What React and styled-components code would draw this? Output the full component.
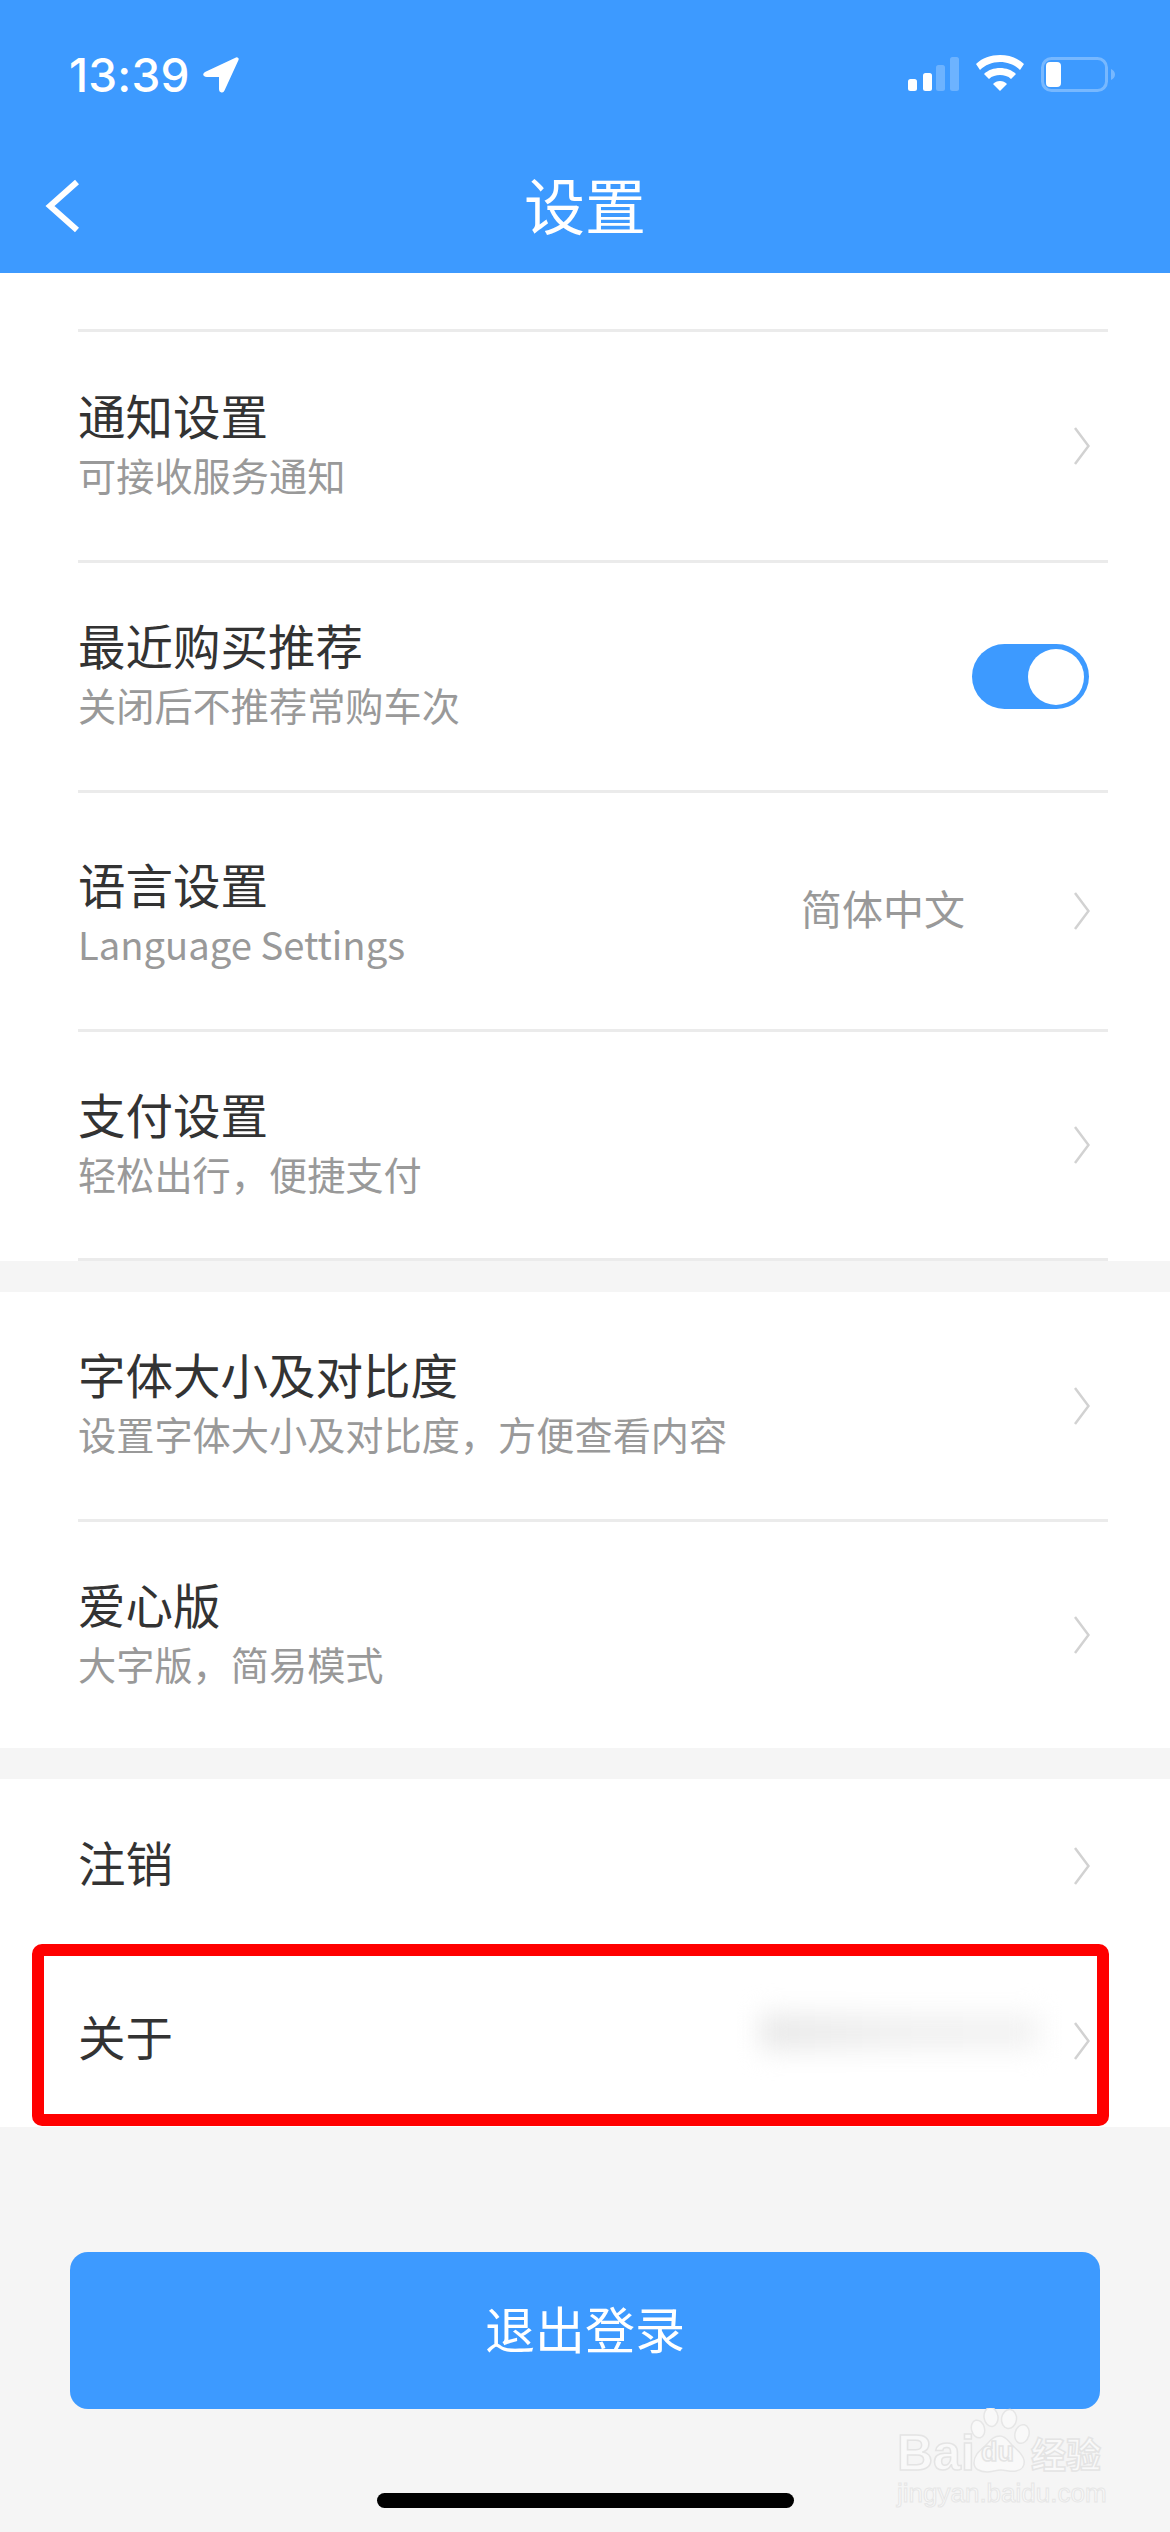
import styled, { createGlobalStyle } from "styled-components";

const GlobalStyle = createGlobalStyle`
  html, body {
    margin: 0;
    padding: 0;
    background: #f5f5f5;
  }
  * {
    box-sizing: border-box;
  }
`;

const cn = `"Noto Sans CJK SC", "Noto Sans", sans-serif`;

export default function App() {
  return (
    <Page>
      <GlobalStyle />
      <Header>
        <StatusBar>
          <Time>
            13:39
            <svg width="36" height="36" viewBox="0 0 36 36">
              <path d="M33 0.500 L2 15 Q-1 17 1 19 Q2 20 4 20 L16 20 L16 32 Q16 35 18.500 35.500 Q20.500 36 21.500 33.500 L35.500 3 Q36 1.500 35 0.800 Q34 0 33 0.500 Z" fill="#fff" />
            </svg>
          </Time>
          <StatusIcons>
            <svg width="51" height="36" viewBox="0 0 51 36">
              <rect x="0" y="24" width="9" height="12" rx="2.500" fill="#fff" />
              <rect x="15" y="18" width="9" height="18" rx="2.500" fill="#fff" />
              <rect x="28" y="10" width="9" height="26" rx="2.500" fill="#fff" opacity="0.25" />
              <rect x="42" y="2" width="9" height="34" rx="2.500" fill="#fff" opacity="0.25" />
            </svg>
            <svg width="48" height="36" viewBox="0 0 48 36">
              <path d="M0 9 C6 3 15 0 24 0 C33 0 42 3 48 9 L44 15 C39 10 32 7 24 7 C16 7 9 10 4 15 Z" fill="#fff" />
              <path d="M8 19 C12 15 18 13 24 13 C30 13 36 15 40 19 L35 24 C32 21 28 20 24 20 C20 20 16 21 13 24 Z" fill="#fff" />
              <path d="M24 26 C21 26 19 27 17 29 L24 36 L31 29 C29 27 27 26 24 26 Z" fill="#fff" />
            </svg>
            <svg width="74" height="37" viewBox="0 0 74 37">
              <rect x="1.500" y="3.500" width="64" height="32" rx="9" fill="none" stroke="#fff" strokeOpacity="0.3" strokeWidth="3" />
              <rect x="5" y="7" width="15" height="25" rx="4" fill="#fff" />
              <path d="M70 14 C72.500 15 74 17 74 19.500 C74 22 72.500 24 70 25 Z" fill="#fff" opacity="0.3" />
            </svg>
          </StatusIcons>
        </StatusBar>
        <NavBar>
          <BackIcon width="40" height="54" viewBox="0 0 40 54">
            <path d="M35 3 L8 27 L35 51" fill="none" stroke="#fff" strokeWidth="6" />
          </BackIcon>
          <Title>设置</Title>
        </NavBar>
      </Header>

      <Group>
        <TopGap />
        <Row $height={231}>
          <RowText>
            <RowTitle>通知设置</RowTitle>
            <RowSub>可接收服务通知</RowSub>
          </RowText>
          <Chevron />
        </Row>
        <Row $height={230}>
          <RowText>
            <RowTitle>最近购买推荐</RowTitle>
            <RowSub>关闭后不推荐常购车次</RowSub>
          </RowText>
          <Toggle>
            <Knob />
          </Toggle>
        </Row>
        <Row $height={239}>
          <RowText $raise={0}>
            <RowTitle>语言设置</RowTitle>
            <RowSub>Language Settings</RowSub>
          </RowText>
          <RowValue>简体中文</RowValue>
          <Chevron />
        </Row>
        <Row $height={229}>
          <RowText>
            <RowTitle>支付设置</RowTitle>
            <RowSub>轻松出行，便捷支付</RowSub>
          </RowText>
          <Chevron />
        </Row>
      </Group>

      <Group $gap>
        <Row $height={230}>
          <RowText>
            <RowTitle>字体大小及对比度</RowTitle>
            <RowSub>设置字体大小及对比度，方便查看内容</RowSub>
          </RowText>
          <Chevron />
        </Row>
        <Row $height={226} $last>
          <RowText>
            <RowTitle>爱心版</RowTitle>
            <RowSub>大字版，简易模式</RowSub>
          </RowText>
          <Chevron />
        </Row>
      </Group>

      <Group $gap>
        <Row $height={165} $last>
          <RowTitle>注销</RowTitle>
          <Chevron offset={4} />
        </Row>
        <Row $height={183} $last>
          <RowTitle>关于</RowTitle>
          <Blurred />
          <Chevron offset={5} />
          <Highlight />
        </Row>
      </Group>

      <Footer>
        <LogoutButton>退出登录</LogoutButton>
        <HomeBar />
        <Watermark>
          <WatermarkLogo>
            <WatermarkWord>Bai</WatermarkWord>
            <Paw>
              <svg width="60" height="65" viewBox="0 0 60 65">
                <g fill="#f9f9f9" stroke="#e6e6e6" strokeWidth="1.500">
                  <ellipse cx="8" cy="21" rx="6.500" ry="9" transform="rotate(-15 8 21)" />
                  <ellipse cx="21" cy="9" rx="7" ry="9.500" transform="rotate(-8 21 9)" />
                  <ellipse cx="39" cy="11" rx="7.500" ry="9.500" transform="rotate(8 39 11)" />
                  <ellipse cx="52" cy="26" rx="7" ry="9.500" transform="rotate(15 52 26)" />
                  <path d="M30 28 C23 28 20 33 15 38 C8 44 4 48 4 55 C4 61 10 64 17 64 C22 64 26 62 31 62 C36 62 41 64 46 63 C52 62 55 58 54 52 C53 46 47 42 42 37 C38 33 36 28 30 28 Z" />
                </g>
              </svg>
              <PawText>du</PawText>
            </Paw>
            <WatermarkCn>经验</WatermarkCn>
          </WatermarkLogo>
          <WatermarkUrl>jingyan.baidu.com</WatermarkUrl>
        </Watermark>
      </Footer>
    </Page>
  );
}

function Chevron({ offset = 0 }) {
  return (
    <ChevronIcon $offset={offset} width="16" height="38" viewBox="0 0 16 38">
      <path d="M1 1 L14.500 19 L1 37" fill="none" stroke="#d2d2d2" strokeWidth="2.500" />
    </ChevronIcon>
  );
}

const Page = styled.div`
  width: 1170px;
  height: 2532px;
  background: #f5f5f5;
  font-family: ${cn};
  overflow: hidden;
`;

const Header = styled.header`
  height: 273px;
  background: #3d9aff;
  color: #fff;
  display: flex;
  flex-direction: column;
`;

const StatusBar = styled.div`
  height: 148px;
  padding: 55px 55px 0 69px;
  display: flex;
  justify-content: space-between;
  align-items: flex-start;
`;

const Time = styled.div`
  display: flex;
  align-items: center;
  gap: 13px;
  padding-top: 2px;
  font-family: Inter, sans-serif;
  font-size: 46px;
  font-weight: 500;
  line-height: 36px;
  letter-spacing: 0.2px;
`;

const StatusIcons = styled.div`
  display: flex;
  align-items: flex-start;
  gap: 17px;
`;

const NavBar = styled.div`
  position: relative;
  flex: 1;
  display: flex;
  align-items: flex-start;
  justify-content: center;
`;

const BackIcon = styled.svg`
  position: absolute;
  left: 42px;
  top: 31px;
`;

const Title = styled.h1`
  margin: 25px 0 0;
  font-size: 61px;
  font-weight: 400;
  line-height: 62px;
`;

const Group = styled.section`
  background: #fff;
  margin-top: ${(p) => (p.$gap ? "31px" : "0")};
`;

const TopGap = styled.div`
  height: 59px;
  margin: 0 62px 0 78px;
  border-bottom: 3px solid #ebebeb;
`;

const Row = styled.div`
  position: relative;
  height: ${(p) => p.$height}px;
  margin: 0 62px 0 78px;
  padding-right: 19px;
  display: flex;
  align-items: center;
  border-bottom: ${(p) => (p.$last ? "none" : "3px solid #ebebeb")};
`;

const RowText = styled.div`
  display: flex;
  flex-direction: column;
  gap: 8px;
  padding-bottom: ${(p) => p.$raise ?? 9}px;
`;

const RowTitle = styled.div`
  font-size: 47.500px;
  line-height: 58px;
  color: #333;
`;

const RowSub = styled.div`
  font-size: 38.200px;
  line-height: 46px;
  color: #999;
`;

const RowValue = styled.div`
  margin-left: auto;
  margin-right: 124px;
  padding-bottom: 8px;
  font-size: 41px;
  color: #999;
`;

const ChevronIcon = styled.svg`
  position: absolute;
  right: 18px;
  top: calc(50% + ${(p) => p.$offset}px);
  margin-top: -19px;
`;

const Toggle = styled.div`
  margin-left: auto;
  width: 117px;
  height: 65px;
  border-radius: 33px;
  background: #3d9aff;
  display: flex;
  align-items: center;
  justify-content: flex-end;
  padding-right: 5px;
`;

const Knob = styled.div`
  width: 56px;
  height: 56px;
  border-radius: 50%;
  background: #fff;
`;

const Blurred = styled.div`
  position: absolute;
  right: 68px;
  top: 70px;
  width: 280px;
  height: 36px;
  background: linear-gradient(90deg, #e8e8e8, #f0f0f0 45%, #f3f3f3);
  filter: blur(13px);
`;

const Highlight = styled.div`
  position: absolute;
  left: -46px;
  right: -1px;
  top: 0;
  bottom: 1px;
  border: 12px solid #ff0000;
  border-radius: 10px;
`;

const Footer = styled.footer`
  position: relative;
  height: 405px;
  padding: 125px 70px 0;
`;

const LogoutButton = styled.button`
  display: block;
  width: 100%;
  height: 157px;
  border: none;
  border-radius: 18px;
  padding: 0 0 8px;
  background: #3d9aff;
  color: #fff;
  font-family: ${cn};
  font-size: 50px;
`;

const HomeBar = styled.div`
  position: absolute;
  left: 377px;
  top: 366px;
  width: 417px;
  height: 15px;
  border-radius: 8px;
  background: #000;
`;

const Watermark = styled.div`
  position: absolute;
  left: 897px;
  top: 281px;
  width: 212px;
  display: flex;
  flex-direction: column;
  gap: 5px;
`;

const WatermarkLogo = styled.div`
  display: flex;
  align-items: flex-end;
  height: 65px;
  color: #f9f9f9;
  -webkit-text-stroke: 1.500px #e4e4e4;
`;

const WatermarkWord = styled.span`
  width: 73px;
  font-family: "Liberation Sans", sans-serif;
  font-size: 50px;
  font-weight: 700;
  line-height: 40px;
`;

const Paw = styled.div`
  position: relative;
  width: 60px;
  height: 65px;
`;

const PawText = styled.span`
  position: absolute;
  left: 11px;
  bottom: 9px;
  font-family: "Liberation Sans", sans-serif;
  font-size: 27px;
  font-weight: 700;
  line-height: 24px;
  color: #f9f9f9;
`;

const WatermarkCn = styled.span`
  margin-left: 1px;
  font-family: ${cn};
  font-size: 35px;
  font-weight: 700;
  line-height: 40px;
  white-space: nowrap;
`;

const WatermarkUrl = styled.div`
  font-family: "Liberation Sans", sans-serif;
  font-size: 26px;
  line-height: 30px;
  color: #f9f9f9;
  -webkit-text-stroke: 1px #e6e6e6;
  white-space: nowrap;
`;
